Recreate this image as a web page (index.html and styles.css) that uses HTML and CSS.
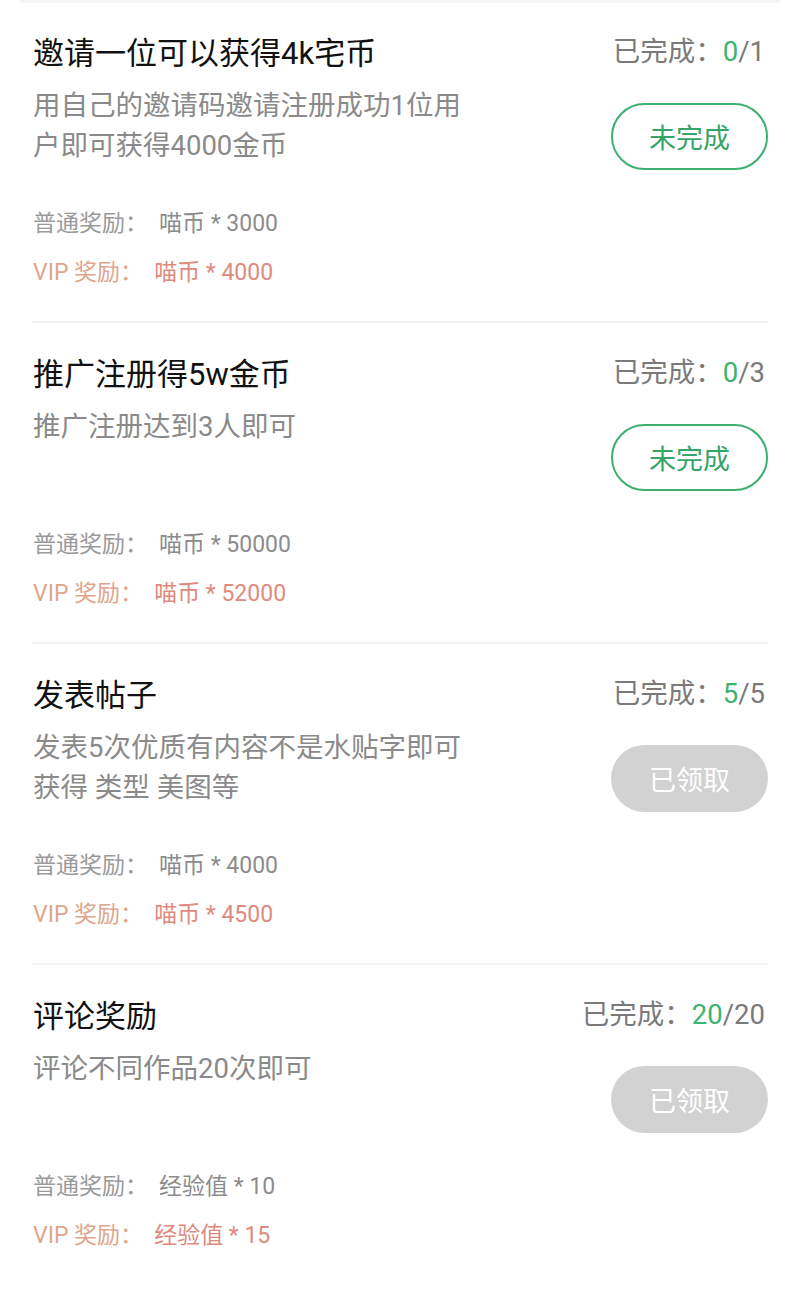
FILE: index.html
```html
<!DOCTYPE html>
<html lang="zh-CN">
<head>
<meta charset="utf-8">
<title>任务</title>
<link rel="stylesheet" href="styles.css">
</head>
<body>
<div class="list">
  <div class="card first">
    <div class="top">
      <div class="info">
        <div class="title">邀请一位可以获得4k宅币</div>
        <div class="desc">用自己的邀请码邀请注册成功1位用户即可获得4000金币</div>
      </div>
      <div class="side">
        <div class="progress">已完成：<span class="done">0</span>/1</div>
        <div class="btn todo">未完成</div>
      </div>
    </div>
    <div class="rewards">
      <div class="row normal"><span class="label">普通奖励：</span><span class="value">喵币 * 3000</span></div>
      <div class="row vip"><span class="label">VIP 奖励：</span><span class="value">喵币 * 4000</span></div>
    </div>
  </div>

  <div class="card">
    <div class="top">
      <div class="info">
        <div class="title">推广注册得5w金币</div>
        <div class="desc">推广注册达到3人即可</div>
      </div>
      <div class="side">
        <div class="progress">已完成：<span class="done">0</span>/3</div>
        <div class="btn todo">未完成</div>
      </div>
    </div>
    <div class="rewards">
      <div class="row normal"><span class="label">普通奖励：</span><span class="value">喵币 * 50000</span></div>
      <div class="row vip"><span class="label">VIP 奖励：</span><span class="value">喵币 * 52000</span></div>
    </div>
  </div>

  <div class="card">
    <div class="top">
      <div class="info">
        <div class="title">发表帖子</div>
        <div class="desc">发表5次优质有内容不是水贴字即可获得 类型 美图等</div>
      </div>
      <div class="side">
        <div class="progress">已完成：<span class="done">5</span>/5</div>
        <div class="btn claimed">已领取</div>
      </div>
    </div>
    <div class="rewards">
      <div class="row normal"><span class="label">普通奖励：</span><span class="value">喵币 * 4000</span></div>
      <div class="row vip"><span class="label">VIP 奖励：</span><span class="value">喵币 * 4500</span></div>
    </div>
  </div>

  <div class="card">
    <div class="top">
      <div class="info">
        <div class="title">评论奖励</div>
        <div class="desc">评论不同作品20次即可</div>
      </div>
      <div class="side">
        <div class="progress">已完成：<span class="done">20</span>/20</div>
        <div class="btn claimed">已领取</div>
      </div>
    </div>
    <div class="rewards">
      <div class="row normal"><span class="label">普通奖励：</span><span class="value">经验值 * 10</span></div>
      <div class="row vip"><span class="label">VIP 奖励：</span><span class="value">经验值 * 15</span></div>
    </div>
  </div>
</div>
</body>
</html>
```

FILE: styles.css
```css
html, body {
  margin: 0;
  padding: 0;
  background: #ffffff;
}

body {
  font-family: Roboto, "Noto Sans CJK SC", sans-serif;
  color: #111;
}

.list {
  display: flex;
  flex-direction: column;
}

.card {
  margin: 0 32px;
  border-top: 2px solid #f3f3f3;
  padding: 30px 0 24px;
  display: flex;
  flex-direction: column;
}

.card.first {
  margin: 0 20px;
  padding: 29px 12px 24px 12px;
  border-top: 3px solid #f6f6f6;
}

.top {
  display: flex;
  justify-content: space-between;
  align-items: flex-start;
}

.info {
  max-width: 440px;
  padding-left: 1px;
}

.title {
  font-size: 31px;
  line-height: 44px;
  color: #111;
}

.desc {
  margin-top: 10px;
  font-size: 27.5px;
  line-height: 40px;
  color: #8a8a8a;
}

.side {
  display: flex;
  flex-direction: column;
  align-items: flex-end;
}

.progress {
  font-size: 27.5px;
  line-height: 40px;
  color: #7a7a7a;
  padding-right: 3px;
}

.progress .done {
  color: #3cb46e;
}

.btn {
  margin-top: 31px;
  width: 157px;
  height: 67px;
  box-sizing: border-box;
  border-radius: 34px;
  display: flex;
  align-items: center;
  justify-content: center;
  font-size: 27px;
}

.btn.todo {
  border: 2px solid #3daf6f;
  color: #36a466;
}

.btn.claimed {
  background: #d2d2d2;
  color: #ffffff;
}

.rewards {
  margin-top: 29px;
  display: flex;
  flex-direction: column;
}

.row {
  font-size: 23px;
  line-height: 49px;
  padding-left: 1px;
}

.row .label {
  margin-right: 11px;
}

.normal .label {
  color: #9a9a9a;
}

.normal .value {
  color: #8c8c8c;
}

.vip .label {
  color: #dea68c;
}

.vip .value {
  color: #e08a7e;
}
```
